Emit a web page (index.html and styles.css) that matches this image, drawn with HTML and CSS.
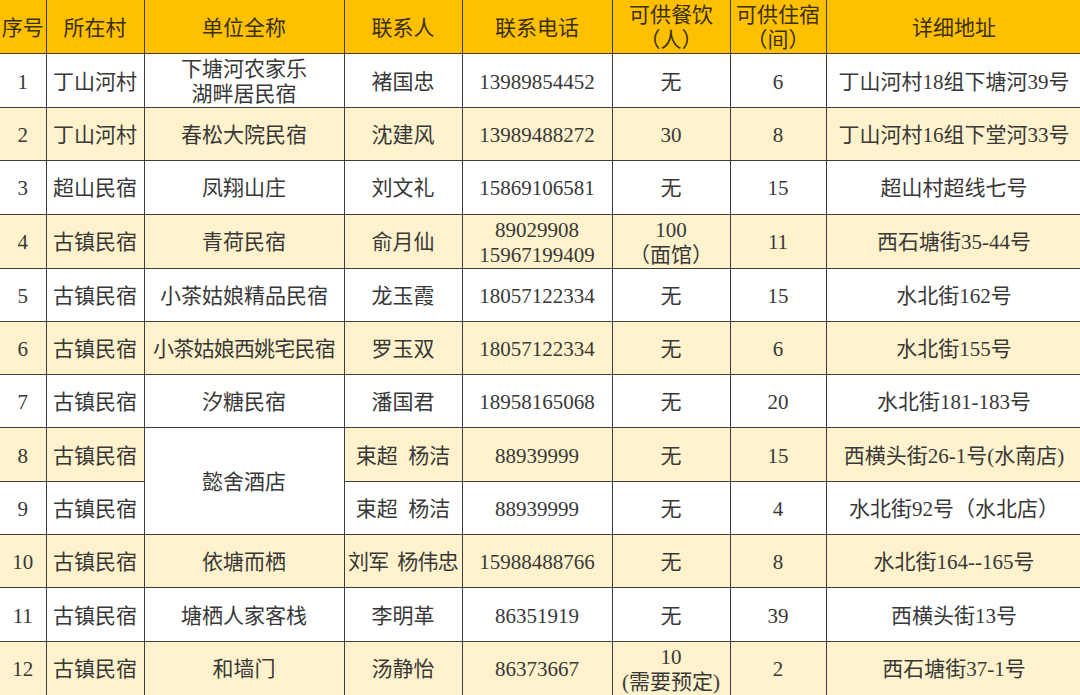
FILE: index.html
```html
<!DOCTYPE html>
<html lang="zh-CN">
<head>
<meta charset="utf-8">
<title>民宿名单</title>
<link rel="stylesheet" href="styles.css">
</head>
<body>
<table class="grid">
  <colgroup>
    <col class="c1"><col class="c2"><col class="c3"><col class="c4"><col class="c5"><col class="c6"><col class="c7"><col class="c8">
  </colgroup>
  <thead>
    <tr class="head">
      <th>序号</th><th>所在村</th><th>单位全称</th><th>联系人</th><th>联系电话</th><th>可供餐饮<br>（人）</th><th>可供住宿<br>（间）</th><th>详细地址</th>
    </tr>
  </thead>
  <tbody>
    <tr class="odd"><td>1</td><td>丁山河村</td><td>下塘河农家乐<br>湖畔居民宿</td><td>褚国忠</td><td>13989854452</td><td>无</td><td>6</td><td>丁山河村18组下塘河39号</td></tr>
    <tr class="even"><td>2</td><td>丁山河村</td><td>春松大院民宿</td><td>沈建风</td><td>13989488272</td><td>30</td><td>8</td><td>丁山河村16组下堂河33号</td></tr>
    <tr class="odd"><td>3</td><td>超山民宿</td><td>凤翔山庄</td><td>刘文礼</td><td>15869106581</td><td>无</td><td>15</td><td>超山村超线七号</td></tr>
    <tr class="even"><td>4</td><td>古镇民宿</td><td>青荷民宿</td><td>俞月仙</td><td>89029908<br>15967199409</td><td>100<br>（面馆）</td><td>11</td><td>西石塘街35-44号</td></tr>
    <tr class="odd"><td>5</td><td>古镇民宿</td><td>小茶姑娘精品民宿</td><td>龙玉霞</td><td>18057122334</td><td>无</td><td>15</td><td>水北街162号</td></tr>
    <tr class="even"><td>6</td><td>古镇民宿</td><td class="tight">小茶姑娘西姚宅民宿</td><td>罗玉双</td><td>18057122334</td><td>无</td><td>6</td><td>水北街155号</td></tr>
    <tr class="odd"><td>7</td><td>古镇民宿</td><td>汐糖民宿</td><td>潘国君</td><td>18958165068</td><td>无</td><td>20</td><td>水北街181-183号</td></tr>
    <tr class="even"><td>8</td><td>古镇民宿</td><td rowspan="2" class="merged">懿舍酒店</td><td>束超&nbsp;&nbsp;杨洁</td><td>88939999</td><td>无</td><td>15</td><td>西横头街26-1号(水南店)</td></tr>
    <tr class="odd"><td>9</td><td>古镇民宿</td><td>束超&nbsp;&nbsp;杨洁</td><td>88939999</td><td>无</td><td>4</td><td>水北街92号（水北店）</td></tr>
    <tr class="even"><td>10</td><td>古镇民宿</td><td>依塘而栖</td><td class="tight">刘军&nbsp;&nbsp;杨伟忠</td><td>15988488766</td><td>无</td><td>8</td><td>水北街164--165号</td></tr>
    <tr class="odd"><td>11</td><td>古镇民宿</td><td>塘栖人家客栈</td><td>李明革</td><td>86351919</td><td>无</td><td>39</td><td>西横头街13号</td></tr>
    <tr class="even"><td>12</td><td>古镇民宿</td><td>和墙门</td><td>汤静怡</td><td>86373667</td><td>10<br>(需要预定)</td><td>2</td><td>西石塘街37-1号</td></tr>
  </tbody>
</table>
</body>
</html>
```
FILE: styles.css
```css
html, body {
  margin: 0;
  padding: 0;
  background: #ffffff;
  overflow: hidden;
}
.grid {
  border-collapse: collapse;
  table-layout: fixed;
  width: 1082px;
  font-family: "Liberation Serif", "Noto Sans CJK SC", serif;
  font-size: 21px;
  color: #383838;
}
.c1 { width: 46px; }
.c2 { width: 98px; }
.c3 { width: 200px; }
.c4 { width: 118px; }
.c5 { width: 150px; }
.c6 { width: 118px; }
.c7 { width: 96px; }
.c8 { width: 256px; }
.grid th, .grid td {
  border: 1px solid #3d3d3d;
  padding: 3px 0 0 0;
  text-align: center;
  vertical-align: middle;
  line-height: 25px;
  font-weight: normal;
  white-space: nowrap;
  overflow: hidden;
}
.grid tr { height: 53.3px; }
.grid tr > :first-child { border-left: none; }
.head th { border-top: none; background: #ffc000; color: #3a3000; }
.even td { background: #fff2cc; }
.odd td { background: #ffffff; }
.even td.merged { background: #ffffff; }
.tight { letter-spacing: -0.8px; }
```
